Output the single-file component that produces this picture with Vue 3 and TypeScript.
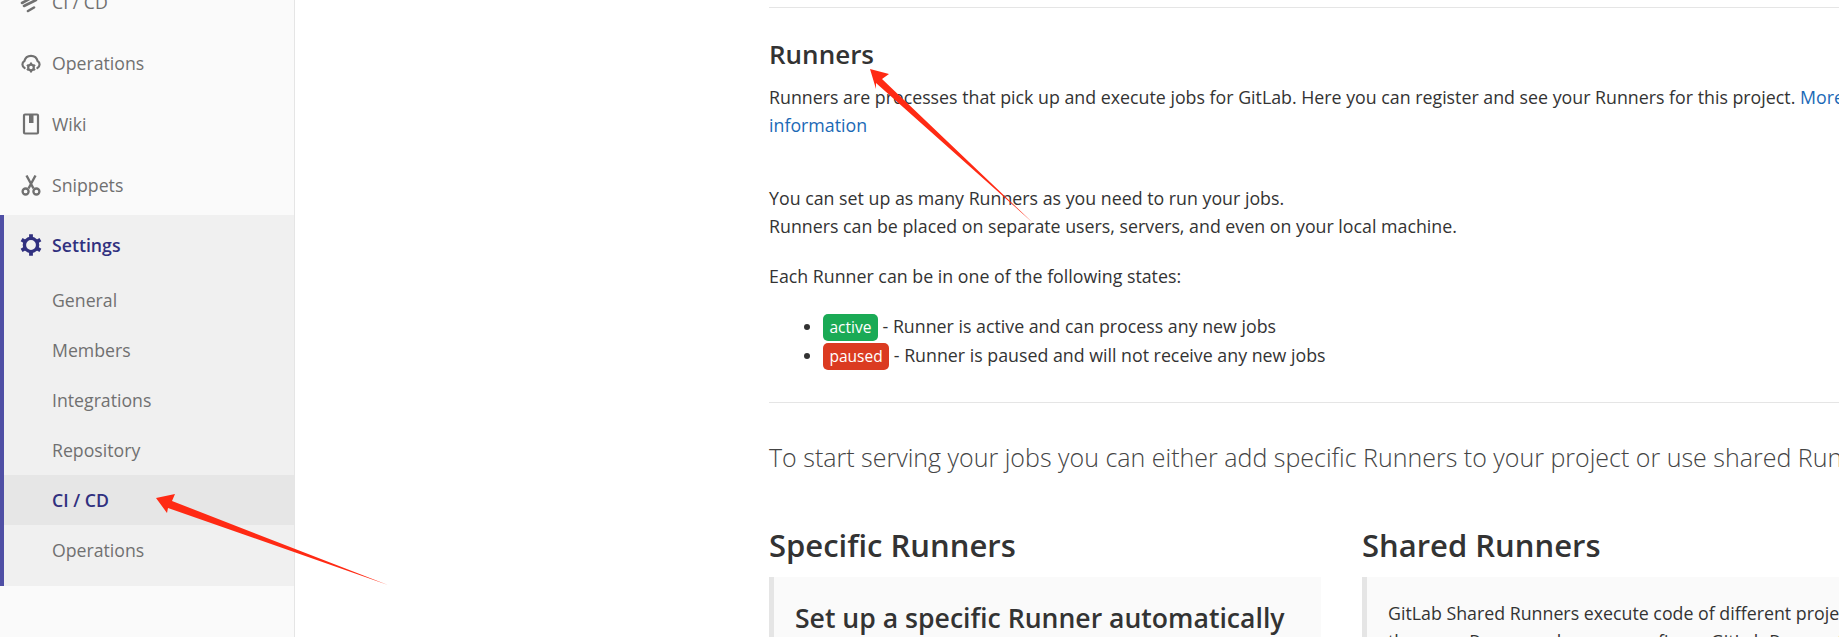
<script setup lang="ts">
const topItems = ['Operations', 'Wiki', 'Snippets']
const subItems = ['General', 'Members', 'Integrations', 'Repository', 'CI / CD', 'Operations']
</script>

<template>
  <div class="page">
    <aside class="sidebar">
      <div class="nav-item first-item">
        <svg class="icon" viewBox="0 0 22 22">
          <path d="M2 12 L13 6 M4 15 L16 9 M8 20 L14 16.5" stroke="#707070" stroke-width="2.6" stroke-linecap="round" fill="none" />
        </svg>
        <span>CI / CD</span>
      </div>
      <div v-for="t in topItems" :key="t" class="nav-item">
        <svg v-if="t === 'Operations'" class="icon" viewBox="0 0 22 22">
          <path d="M4.6 16 A4 4 0 0 1 4.4 9 A6.8 6.8 0 0 1 17.6 9 A4 4 0 0 1 17.4 16" fill="none" stroke="#707070" stroke-width="2.2" stroke-linecap="round" />
          <circle cx="11" cy="15.5" r="2.8" fill="none" stroke="#707070" stroke-width="2.2" />
          <path d="M11 10.6 V12.6 M11 18.4 V20.4 M6.8 13 L8.5 14 M13.5 17 L15.2 18 M6.8 18 L8.5 17 M13.5 14 L15.2 13" stroke="#707070" stroke-width="2" />
        </svg>
        <svg v-else-if="t === 'Wiki'" class="icon" viewBox="0 0 22 22">
          <rect x="4" y="1.5" width="14" height="19" rx="1" fill="none" stroke="#707070" stroke-width="2.2" />
          <path d="M9 1.5 H13.5 V10 H9 Z" fill="#707070" />
        </svg>
        <svg v-else class="icon" viewBox="0 0 22 22">
          <path d="M6.5 1.5 L13.5 14.5 M15.5 1.5 L8.5 14.5" stroke="#707070" stroke-width="2.4" fill="none" />
          <circle cx="5.6" cy="17.5" r="3" fill="none" stroke="#707070" stroke-width="2.3" />
          <circle cx="16.4" cy="17.5" r="3" fill="none" stroke="#707070" stroke-width="2.3" />
        </svg>
        <span>{{ t }}</span>
      </div>
      <div class="group">
        <div class="nav-item head">
          <svg class="icon" viewBox="0 0 22 22">
            <circle cx="11" cy="11" r="6.6" fill="none" stroke="#30307f" stroke-width="3.4" />
            <path d="M11 0.2 V4 M11 18 V21.8 M1.6 5.6 L5 7.6 M17 14.4 L20.4 16.4 M1.6 16.4 L5 14.4 M17 7.6 L20.4 5.6" stroke="#30307f" stroke-width="3.8" />
          </svg>
          <span>Settings</span>
        </div>
        <div class="subs">
          <div v-for="s in subItems" :key="s + 'x'" class="sub" :class="{ active: s === 'CI / CD' }">{{ s }}</div>
        </div>
      </div>
    </aside>

    <main class="content">
      <hr class="rule first" />
      <h4 class="title">Runners</h4>
      <p class="intro">
        Runners are processes that pick up and execute jobs for GitLab. Here you can register and see your Runners for this project.
        <a>More information</a>
      </p>
      <p class="para-a">You can set up as many Runners as you need to run your jobs.<br />Runners can be placed on separate users, servers, and even on your local machine.</p>
      <p class="para-b">Each Runner can be in one of the following states:</p>
      <ul class="states">
        <li><span class="badge green">active</span> - Runner is active and can process any new jobs</li>
        <li><span class="badge red">paused</span> - Runner is paused and will not receive any new jobs</li>
      </ul>
      <hr class="rule second" />
      <p class="lead">To start serving your jobs you can either add specific Runners to your project or use shared Runners</p>
      <div class="cols">
        <section class="col">
          <h3>Specific Runners</h3>
          <div class="well">
            <h4 class="well-title">Set up a specific Runner automatically</h4>
          </div>
        </section>
        <section class="col">
          <h3>Shared Runners</h3>
          <div class="well">
            <p class="well-text">GitLab Shared Runners execute code of different projects on<br />the same Runner unless you configure GitLab Runner Autoscale</p>
          </div>
        </section>
      </div>
    </main>

    <svg class="arrows" width="1839" height="637" viewBox="0 0 1839 637">
      <path d="M156 498 L175 494 L172 501 L388 585 L168 508 L167 513 Z" fill="#ff2a14" />
      <path d="M870 69 L889 74 L882 79 L1032 222 L1033 223 L876 83 L876 89 Z" fill="#ff2a14" />
    </svg>
  </div>
</template>

<style scoped>
.page {
  position: relative;
  display: flex;
  width: 1839px;
  height: 637px;
  overflow: hidden;
  background: #fff;
  font-family: "Open Sans", "Noto Sans", sans-serif;
  color: #333;
}
.sidebar {
  flex: none;
  width: 295px;
  height: 637px;
  box-sizing: border-box;
  background: #fafafa;
  border-right: 1px solid #e5e5e5;
  color: #707070;
  font-size: 17.7px;
}
.nav-item {
  display: flex;
  align-items: center;
  height: 61px;
  padding-left: 20px;
  gap: 10px;
}
.first-item {
  margin-top: -29px;
}
.icon {
  width: 22px;
  height: 22px;
  flex: none;
}
.group {
  border-left: 4px solid #4f4fa5;
  background: #f0f0f0;
  height: 371px;
  box-sizing: border-box;
}
.nav-item.head {
  padding-left: 16px;
  color: #30307f;
  font-weight: 600;
  height: 60px;
}
.subs {
  display: flex;
  flex-direction: column;
}
.sub {
  height: 50px;
  line-height: 50px;
  padding-left: 48px;
}
.sub.active {
  background: #e6e6e6;
  color: #30307f;
  font-weight: 600;
}
.content {
  flex: none;
  width: 1100px;
  margin-left: 474px;
  font-size: 17.8px;
  line-height: 28px;
}
.rule {
  border: 0;
  border-top: 1px solid #e5e5e5;
  margin: 0;
}
.rule.first {
  margin-top: 7px;
}
.rule.second {
  margin-top: 32px;
}
.title {
  margin: 30px 0 0;
  font-size: 26px;
  line-height: 32px;
  font-weight: 600;
}
.intro {
  margin: 13px 0 0;
}
a {
  color: #1b69b6;
}
.para-a {
  margin: 45px 0 0;
}
.para-b {
  margin: 22px 0 0;
}
.states {
  margin: 22px 0 0;
  padding-left: 54px;
  line-height: 29px;
}
.states li {
  height: 29px;
}
.badge {
  display: inline-block;
  color: #fff;
  font-size: 15.5px;
  line-height: 27px;
  padding: 0 6.5px;
  border-radius: 5px;
}
.green { background: #1aaa55; }
.red { background: #db3b21; }
.lead {
  margin: 36px 0 0;
  font-size: 25px;
  font-weight: 300;
  line-height: 36px;
  white-space: nowrap;
  color: #444;
}
.cols {
  display: grid;
  grid-template-columns: 552px 552px;
  gap: 41px;
  margin-top: 49px;
}
h3 {
  margin: 0 0 11px;
  font-size: 31px;
  line-height: 42px;
  font-weight: 600;
}
.well {
  border-left: 5px solid #e5e5e5;
  background: #fafafa;
  padding: 25px 21px;
  height: 140px;
}
.well-title {
  margin: 0;
  font-size: 26.6px;
  line-height: 32px;
  font-weight: 600;
  white-space: nowrap;
}
.well-text {
  margin: -3px 0 0;
  white-space: nowrap;
}
.arrows {
  position: absolute;
  left: 0;
  top: 0;
  pointer-events: none;
}
</style>
